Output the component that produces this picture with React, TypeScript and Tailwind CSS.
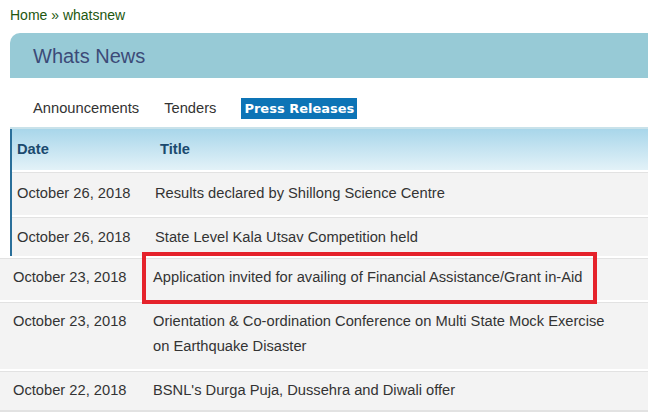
const topRows = [
  { date: 'October 26, 2018', title: 'Results declared by Shillong Science Centre', size: 'h-[45px] pt-[9px]' },
  { date: 'October 26, 2018', title: 'State Level Kala Utsav Competition held', size: 'h-[41px] pt-[8px]' },
]

const lowerRows = [
  {
    date: 'October 23, 2018',
    title: ['Application invited for availing of Financial Assistance/Grant in-Aid'],
    size: 'h-[44px] pt-[7px]',
    marked: true,
  },
  {
    date: 'October 23, 2018',
    title: ['Orientation & Co-ordination Conference on Multi State Mock Exercise', 'on Earthquake Disaster'],
    size: 'h-[69px] pt-[7px]',
  },
  {
    date: 'October 22, 2018',
    title: ["BSNL's Durga Puja, Dussehra and Diwali offer"],
    size: 'h-[41px] pt-[7px]',
  },
]

const App = () => (
  <div className="h-[413px] w-[648px] overflow-hidden bg-white font-['Liberation_Sans',Arial,sans-serif] text-[14.7px] text-[#333]">
    <div className="px-[10px] pt-[6px] text-[14px] leading-[18px] text-[#22570f]">Home » whatsnew</div>

    <div className="ml-[10px] mt-[9px]">
      <div className="flex h-[45px] items-center rounded-tl-[10px] bg-[#97cad6] pl-[23px] text-[20px] text-[#3c4a78]">
        Whats News
      </div>
      <div className="flex h-[51px] items-end gap-[25px] border-b-2 border-[#c9e2ea] bg-white pb-[8px] pl-[23px] leading-[21px]">
        <span>Announcements</span>
        <span>Tenders</span>
        <span className="bg-[#0d74b6] px-[3px] py-[2px] font-['DejaVu_Sans',sans-serif] text-[13px] font-bold leading-[17px] text-white">
          Press Releases
        </span>
      </div>
      <div className="border-l-2 border-[#2a6f9a]">
        <div className="flex h-[41px] items-center bg-gradient-to-b from-[#a8d6ea] to-[#e3f2f8] font-bold text-[#1b4a6e]">
          <span className="w-[148px] pl-[5px]">Date</span>
          <span>Title</span>
        </div>
        {topRows.map((row, i) => (
          <div
            key={i}
            className={`flex border-t-2 border-white bg-[#f3f3f3] leading-[25px] shadow-[inset_0_1px_0_#e2e2e2] ${row.size}`}
          >
            <span className="w-[143px] shrink-0 pl-[5px]">{row.date}</span>
            <span>{row.title}</span>
          </div>
        ))}
      </div>
    </div>

    <div>
      {lowerRows.map((row, i) => (
        <div
          key={i}
          className={`relative flex border-t-2 border-white bg-[#f3f3f3] leading-[25px] shadow-[inset_0_1px_0_#e2e2e2] ${row.size}`}
        >
          <span className="w-[153px] shrink-0 pl-[13px]">{row.date}</span>
          <span>
            {row.title.map((line, j) => (
              <span key={j} className="block">
                {line}
              </span>
            ))}
          </span>
          {row.marked && (
            <div className="pointer-events-none absolute left-[142px] top-[-6px] z-10 h-[52px] w-[455px] border-4 border-[#e5222b]" />
          )}
        </div>
      ))}
      <div className="h-[2px] bg-[#e2e2e2]" />
    </div>
  </div>
)

export default App
